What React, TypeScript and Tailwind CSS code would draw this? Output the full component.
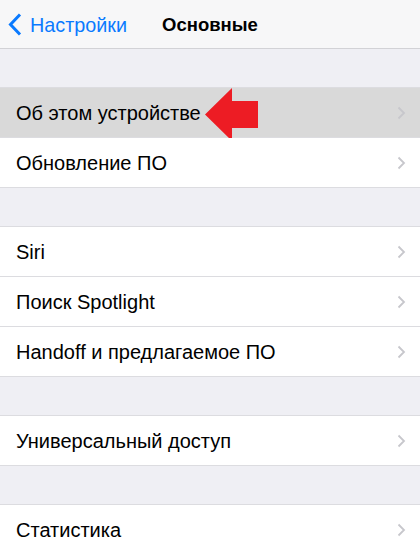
import { Fragment } from 'react';

const groups: string[][] = [
  ['Об этом устройстве', 'Обновление ПО'],
  ['Siri', 'Поиск Spotlight', 'Handoff и предлагаемое ПО'],
  ['Универсальный доступ'],
  ['Статистика'],
];

function Chevron() {
  return (
    <svg width="9" height="14" viewBox="0 0 9 14" className="shrink-0">
      <path d="M1.5 1.5 L7 7 L1.5 12.5" fill="none" stroke="#c7c7cc" strokeWidth="1.8" />
    </svg>
  );
}

function RedArrow() {
  return (
    <svg width="54" height="54" viewBox="0 0 54 54" className="absolute left-[205px] top-0">
      <polygon points="0,26.5 27,0 27,13 53,13 53,40 27,40 27,53" fill="#ed1c24" />
    </svg>
  );
}

export default function App() {
  return (
    <div
      className="w-[420px] h-[554px] overflow-hidden bg-[#efeff4] text-black"
      style={{ fontFamily: '"Liberation Sans", Arial, sans-serif' }}
    >
      <div className="relative h-[49px] bg-[#f7f7f8] border-b border-[#d2d2d6] flex items-center pt-[3px]">
        <div className="flex items-center pl-[8px] gap-[8px] text-[#0a7aff]">
          <svg width="14" height="23" viewBox="0 0 14 23" className="-mt-[2px]">
            <path d="M12 1.5 L2.5 11.5 L12 21.5" fill="none" stroke="#0a7aff" strokeWidth="3" />
          </svg>
          <span className="text-[19.8px] leading-none">Настройки</span>
        </div>
        <div className="absolute inset-x-0 text-center text-[18.5px] font-bold leading-none pointer-events-none">
          Основные
        </div>
      </div>

      {groups.map((rows, gi) => (
        <Fragment key={gi}>
          <div className="h-[39px] border-b border-[#dcdce0]" />
          <div className="bg-white">
            {rows.map((label, ri) => {
              const active = gi === 0 && ri === 0;
              return (
                <div
                  key={label}
                  className={`relative h-[50px] flex items-center justify-between pl-[16px] pr-[14px] border-b border-[#dcdce0] ${
                    active ? 'bg-[#d9d9d9]' : 'bg-white'
                  }`}
                >
                  <span className="text-[20px] leading-none">{label}</span>
                  <Chevron />
                  {active && <RedArrow />}
                </div>
              );
            })}
          </div>
        </Fragment>
      ))}
    </div>
  );
}
